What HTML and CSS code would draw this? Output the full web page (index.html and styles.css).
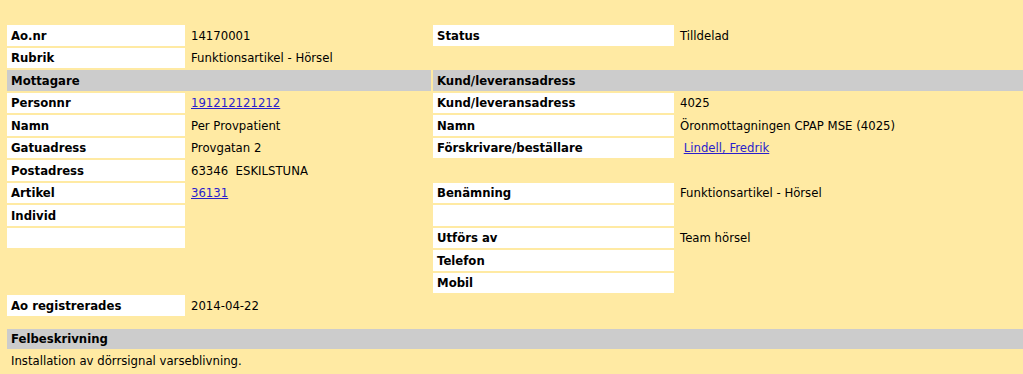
FILE: index.html
```html
<!DOCTYPE html>
<html lang="sv">
<head>
  <meta charset="UTF-8">
  <title>Arbetsorder 14170001</title>
  <link rel="stylesheet" href="styles.css">
</head>
<body>
  <div class="order">
    <div class="lbl">Ao.nr</div>
    <div class="val">14170001</div>
    <div class="lbl">Status</div>
    <div class="val">Tilldelad</div>

    <div class="lbl">Rubrik</div>
    <div class="val">Funktionsartikel - Hörsel</div>
    <div class="none"></div>
    <div class="none"></div>

    <div class="head">Mottagare</div>
    <div class="head">Kund/leveransadress</div>

    <div class="lbl">Personnr</div>
    <div class="val"><a href="#">191212121212</a></div>
    <div class="lbl">Kund/leveransadress</div>
    <div class="val">4025</div>

    <div class="lbl">Namn</div>
    <div class="val">Per Provpatient</div>
    <div class="lbl">Namn</div>
    <div class="val">Öronmottagningen CPAP MSE (4025)</div>

    <div class="lbl">Gatuadress</div>
    <div class="val">Provgatan 2</div>
    <div class="lbl">Förskrivare/beställare</div>
    <div class="val">&nbsp;<a href="#">Lindell, Fredrik</a></div>

    <div class="lbl">Postadress</div>
    <div class="val">63346&nbsp; ESKILSTUNA</div>
    <div class="none"></div>
    <div class="none"></div>

    <div class="lbl">Artikel</div>
    <div class="val"><a href="#">36131</a></div>
    <div class="lbl">Benämning</div>
    <div class="val">Funktionsartikel - Hörsel</div>

    <div class="lbl">Individ</div>
    <div class="val"></div>
    <div class="lbl"></div>
    <div class="val"></div>

    <div class="lbl"></div>
    <div class="val"></div>
    <div class="lbl">Utförs av</div>
    <div class="val">Team hörsel</div>

    <div class="none"></div>
    <div class="none"></div>
    <div class="lbl">Telefon</div>
    <div class="val"></div>

    <div class="none"></div>
    <div class="none"></div>
    <div class="lbl">Mobil</div>
    <div class="val"></div>

    <div class="lbl">Ao registrerades</div>
    <div class="val">2014-04-22</div>
    <div class="none"></div>
    <div class="none"></div>
  </div>

  <div class="fault">
    <div class="head">Felbeskrivning</div>
    <div class="text">Installation av dörrsignal varseblivning.</div>
  </div>
</body>
</html>
```

FILE: styles.css
```css
body {
  margin: 0 0 0 7px;
  padding-top: 25px;
  background-color: #ffeaa3;
  color: #000;
  font-family: 'DejaVu Sans', Verdana, sans-serif;
  font-size: 11.7px;
}

a {
  color: #2a1fcc;
}

.order {
  display: grid;
  grid-template-columns: 178px 244px 241px 1fr;
  grid-auto-rows: 20.5px;
  gap: 2px;
}

.order > div {
  display: flex;
  align-items: center;
  padding: 1px 4px 0;
  white-space: nowrap;
}

.lbl {
  background-color: #fff;
  font-weight: bold;
}

.head {
  grid-column: span 2;
  background-color: #cccccc;
  font-weight: bold;
}

.fault {
  margin-top: 13px;
}

.fault .head {
  height: 20px;
  display: flex;
  align-items: center;
  padding: 1px 4px 0;
  box-sizing: border-box;
}

.fault .text {
  padding: 5px 4px;
}
```
